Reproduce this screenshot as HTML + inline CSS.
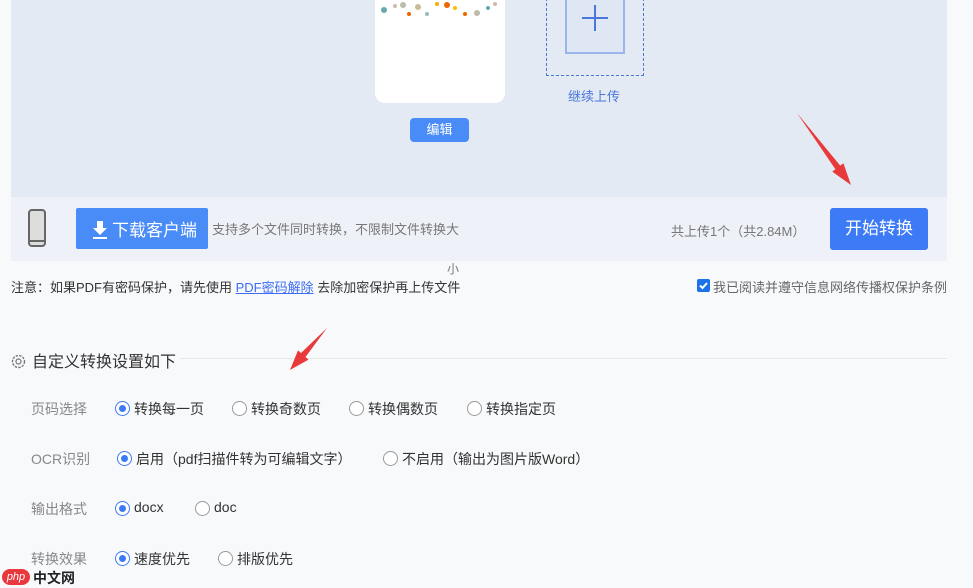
<!DOCTYPE html>
<html><head><meta charset="utf-8"><style>
*{margin:0;padding:0;box-sizing:border-box}
body{width:973px;height:587px;overflow:hidden;background:#f8f9fb;font-family:"Liberation Sans","Noto Sans CJK SC",sans-serif;position:relative;color:#333}
.a{position:absolute;white-space:nowrap}
.radio{position:absolute;width:15px;height:15px;border:1px solid #999;border-radius:50%;background:#fff}
.radio.on{border-color:#3d7af5}
.radio.on::after{content:"";position:absolute;left:3px;top:3px;width:7px;height:7px;border-radius:50%;background:#3d7af5}
.lbl{font-size:14px;color:#888}
.opt{font-size:14px;color:#333}
</style></head><body>
<div class="a" style="left:11px;top:0;width:936px;height:197px;background:#e4eaf4"></div>
<div class="a" style="left:11px;top:197px;width:936px;height:64px;background:#eef2f8"></div>
<div class="a" style="left:375px;top:-10px;width:130px;height:113px;background:#fff;border-radius:10px"></div>
<svg class="a" style="left:375px;top:0" width="130" height="18">
<circle cx="9" cy="10" r="3" fill="#6aa"/><circle cx="20" cy="6" r="2" fill="#cba"/><circle cx="28" cy="5" r="3" fill="#bba"/><circle cx="34" cy="14" r="2" fill="#e60"/><circle cx="43" cy="7" r="3" fill="#cb9"/><circle cx="52" cy="14" r="2" fill="#9bb"/><circle cx="62" cy="4" r="2" fill="#fa0"/><circle cx="72" cy="5" r="3" fill="#e60"/><circle cx="80" cy="8" r="2" fill="#fb0"/><circle cx="90" cy="14" r="2" fill="#e60"/><circle cx="102" cy="13" r="3" fill="#bba"/><circle cx="113" cy="8" r="2" fill="#6aa"/><circle cx="120" cy="4" r="2" fill="#cba"/>
</svg>
<div class="a" style="left:410px;top:118px;width:59px;height:24px;background:#4a8cf7;border-radius:4px;color:#fff;font-size:13px;text-align:center;line-height:24px">编辑</div>
<div class="a" style="left:546px;top:-2px;width:98px;height:78px;border:1px dashed #4a78d8"></div>
<div class="a" style="left:565px;top:-2px;width:60px;height:56px;border:2px solid #9bb4ec;background:#dfe7f5"></div>
<div class="a" style="left:582px;top:17px;width:26px;height:2px;background:#4a78d8"></div>
<div class="a" style="left:594px;top:5px;width:2px;height:26px;background:#4a78d8"></div>
<div class="a" style="left:568px;top:86px;font-size:13px;color:#4a78d8">继续上传</div>
<div class="a" style="left:28px;top:209px;width:18px;height:38px;border:2px solid #666;border-radius:4px;background:#ddd"></div>
<div class="a" style="left:30px;top:240px;width:14px;height:2px;background:#666"></div>
<div class="a" style="left:76px;top:208px;width:132px;height:41px;background:#4a8cf7;border-radius:2px"></div>
<svg class="a" style="left:92px;top:220px" width="16" height="20"><path d="M5 1h6v7h4l-7 7-7-7h4z" fill="#fff"/><rect x="1" y="17" width="14" height="2" fill="#fff"/></svg>
<div class="a" style="left:112px;top:216px;font-size:17px;color:#fff">下载客户端</div>
<div class="a" style="left:212px;top:219px;font-size:13px;color:#777">支持多个文件同时转换，不限制文件转换大</div>
<div class="a" style="left:671px;top:221px;font-size:13px;color:#777">共上传1个（共2.84M）</div>
<div class="a" style="left:830px;top:208px;width:98px;height:42px;background:#3d7af5;border-radius:3px;color:#fff;font-size:17px;text-align:center;line-height:42px">开始转换</div>
<div class="a" style="left:447px;top:260px;font-size:12px;color:#777">小</div>
<div class="a" style="left:11px;top:277px;font-size:13px;color:#333">注意：如果PDF有密码保护，请先使用 <span style="color:#3d6cf5;text-decoration:underline">PDF密码解除</span> 去除加密保护再上传文件</div>
<div class="a" style="left:697px;top:279px;width:13px;height:13px;background:#1a73e8;border-radius:2px"></div>
<svg class="a" style="left:697px;top:279px" width="13" height="13"><path d="M3 6.5l2.5 2.5 4.5-5" stroke="#fff" stroke-width="2" fill="none"/></svg>
<div class="a" style="left:713px;top:277px;font-size:13px;color:#666">我已阅读并遵守信息网络传播权保护条例</div>
<div class="a" style="left:180px;top:358px;width:767px;height:1px;background:#e8e8e8"></div>
<svg class="a" style="left:10px;top:353px" width="17" height="17"><circle cx="8.5" cy="8.5" r="6" fill="none" stroke="#777" stroke-width="1.4" stroke-dasharray="2.4 1.2"/><circle cx="8.5" cy="8.5" r="2.5" fill="none" stroke="#777" stroke-width="1.2"/></svg>
<div class="a" style="left:32px;top:348px;font-size:16px;color:#333">自定义转换设置如下</div>
<div class="a lbl" style="left:31px;top:399px">页码选择</div>
<div class="radio on" style="left:115px;top:401px"></div><div class="a opt" style="left:134px;top:399px">转换每一页</div>
<div class="radio" style="left:232px;top:401px"></div><div class="a opt" style="left:251px;top:399px">转换奇数页</div>
<div class="radio" style="left:349px;top:401px"></div><div class="a opt" style="left:368px;top:399px">转换偶数页</div>
<div class="radio" style="left:467px;top:401px"></div><div class="a opt" style="left:486px;top:399px">转换指定页</div>
<div class="a lbl" style="left:31px;top:449px">OCR识别</div>
<div class="radio on" style="left:117px;top:451px"></div><div class="a opt" style="left:136px;top:449px">启用（pdf扫描件转为可编辑文字）</div>
<div class="radio" style="left:383px;top:451px"></div><div class="a opt" style="left:402px;top:449px">不启用（输出为图片版Word）</div>
<div class="a lbl" style="left:31px;top:499px">输出格式</div>
<div class="radio on" style="left:115px;top:501px"></div><div class="a opt" style="left:134px;top:499px">docx</div>
<div class="radio" style="left:195px;top:501px"></div><div class="a opt" style="left:214px;top:499px">doc</div>
<div class="a lbl" style="left:31px;top:549px">转换效果</div>
<div class="radio on" style="left:115px;top:551px"></div><div class="a opt" style="left:134px;top:549px">速度优先</div>
<div class="radio" style="left:218px;top:551px"></div><div class="a opt" style="left:237px;top:549px">排版优先</div>
<svg class="a" style="left:0;top:0" width="973" height="587">
<path d="M797 113L840.2 165.6L843.4 163.2L851 185L832.2 171.6L835.4 169.2Z" fill="#e83a3a"/>
<path d="M327 328L305.5 357L308.5 359.6L290 370L298 350.4L301 353Z" fill="#e83a3a"/>
</svg>
<div class="a" style="left:2px;top:569px;width:28px;height:16px;background:#e8383d;border-radius:8px;color:#fff;font-size:11px;text-align:center;line-height:16px;font-style:italic">php</div>
<div class="a" style="left:33px;top:568px;font-size:14px;font-weight:bold;color:#222">中文网</div>
</body></html>
